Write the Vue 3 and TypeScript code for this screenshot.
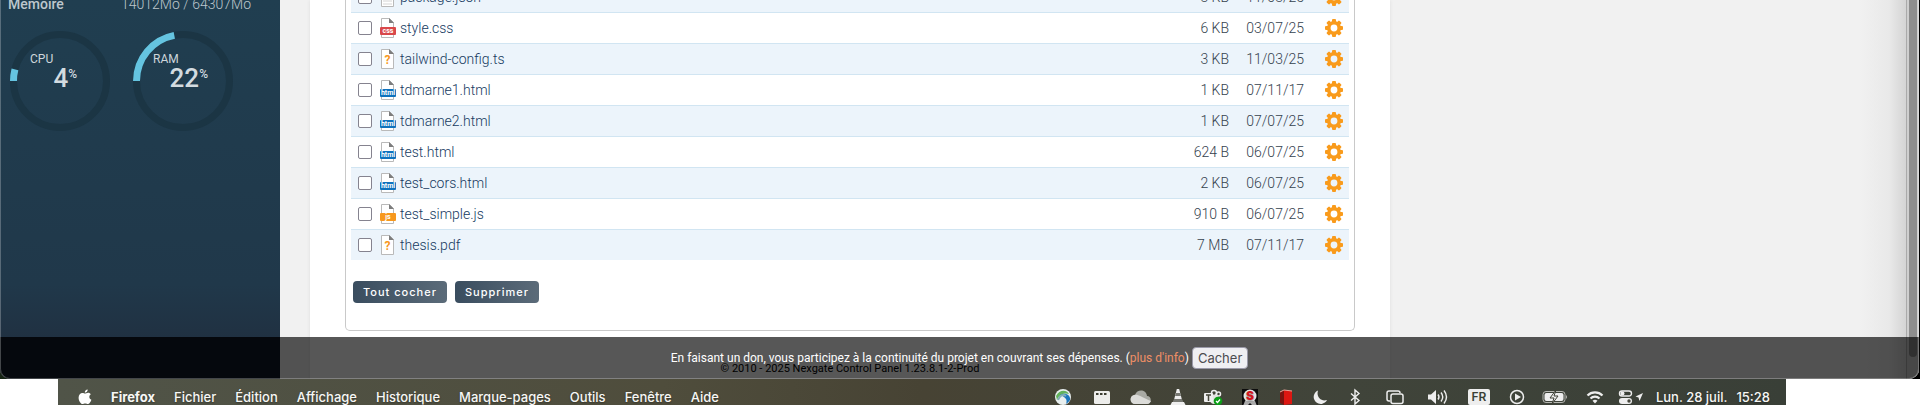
<script setup lang="ts">
import { ref } from 'vue'

type Kind = 'text' | 'css' | 'unknown' | 'html' | 'js'

interface FileRow {
  name: string
  kind: Kind
  size: string
  date: string
}

interface Gauge {
  label: string
  value: number
  x: number
}

const files: FileRow[] = [
  { name: 'package.json', kind: 'text', size: '3 KB', date: '11/03/25' },
  { name: 'style.css', kind: 'css', size: '6 KB', date: '03/07/25' },
  { name: 'tailwind-config.ts', kind: 'unknown', size: '3 KB', date: '11/03/25' },
  { name: 'tdmarne1.html', kind: 'html', size: '1 KB', date: '07/11/17' },
  { name: 'tdmarne2.html', kind: 'html', size: '1 KB', date: '07/07/25' },
  { name: 'test.html', kind: 'html', size: '624 B', date: '06/07/25' },
  { name: 'test_cors.html', kind: 'html', size: '2 KB', date: '06/07/25' },
  { name: 'test_simple.js', kind: 'js', size: '910 B', date: '06/07/25' },
  { name: 'thesis.pdf', kind: 'unknown', size: '7 MB', date: '07/11/17' },
]

const badgeColors: Record<string, string> = { css: '#d9484a', html: '#0f72bd', js: '#f7981d' }

const gauges: Gauge[] = [
  { label: 'CPU', value: 4, x: 67 },
  { label: 'RAM', value: 22, x: 75 },
]

const menus = ['Fichier', 'Édition', 'Affichage', 'Historique', 'Marque-pages', 'Outils', 'Fenêtre', 'Aide']

const selected = ref<string[]>([])
const teeth = [0, 45, 90, 135, 180, 225, 270, 315]

function checkAll() {
  selected.value = selected.value.length === files.length ? [] : files.map((f) => f.name)
}
</script>

<template>
  <div class="desktop">
    <div class="backdrop">
      <div class="window">
        <aside class="sidebar">
          <div class="memory"><strong>Mémoire</strong><span>14012Mo / 64307Mo</span></div>
          <div class="gauges">
            <svg v-for="g in gauges" :key="g.label" width="100" height="100" viewBox="0 0 100 100">
              <circle class="ring" cx="50" cy="50" r="46.5" />
              <circle class="arc" cx="50" cy="50" r="46.5" pathLength="100" :stroke-dasharray="g.value + ' 100'" transform="rotate(180 50 50)" />
              <text class="gauge-label" x="20" y="32">{{ g.label }}</text>
              <text class="gauge-value" :x="g.x" y="56">{{ g.value }}<tspan class="percent" dy="-9">%</tspan></text>
            </svg>
          </div>
        </aside>

        <main class="page">
          <div class="card">
            <section class="files">
              <table>
                <tbody>
                  <tr v-for="f in files" :key="f.name">
                    <td class="check"><input v-model="selected" type="checkbox" :value="f.name" :aria-label="f.name" /></td>
                    <td class="icon">
                      <svg width="18" height="20" viewBox="0 0 18 20">
                        <path d="M2.500 .5h8l4 4v15h-12z" fill="#fff" stroke="#b9b9b9" />
                        <path d="M10 0l5 5h-5z" fill="#7d7d7d" />
                        <path v-if="f.kind === 'text'" d="M4 8h9M4 11h9M4 14h9M4 17h9" stroke="#d5d5d5" />
                        <text v-else-if="f.kind === 'unknown'" class="question" x="8.5" y="15">?</text>
                        <template v-else>
                          <rect x="1" y="9" width="16" height="8" rx="1" :fill="badgeColors[f.kind]" />
                          <text class="badge" x="9" y="15">{{ f.kind }}</text>
                        </template>
                      </svg>
                    </td>
                    <td class="name"><a href="#">{{ f.name }}</a></td>
                    <td class="size">{{ f.size }}</td>
                    <td class="date">{{ f.date }}</td>
                    <td class="action">
                      <button type="button" class="gear" :aria-label="'Options ' + f.name">
                        <svg width="18" height="18" viewBox="-9 -9 18 18">
                          <rect v-for="t in teeth" :key="t" x="-2" y="-9" width="4" height="5" rx="1" fill="#f99b1c" :transform="'rotate(' + t + ')'" />
                          <circle r="5.2" fill="none" stroke="#f99b1c" stroke-width="3.6" />
                        </svg>
                      </button>
                    </td>
                  </tr>
                </tbody>
              </table>
              <div class="bulk">
                <button type="button" @click="checkAll">Tout cocher</button>
                <button type="button">Supprimer</button>
              </div>
            </section>
            <footer>© 2010 - 2025 Nexgate Control Panel 1.23.8.1-2-Prod</footer>
          </div>
        </main>

        <div class="edge"><div class="track"><div class="thumb"></div></div></div>

        <div class="banner">
          <span>En faisant un don, vous participez à la continuité du projet en couvrant ses dépenses. (<a href="#">plus d'info</a>)</span>
          <button type="button">Cacher</button>
        </div>
      </div>
    </div>

    <nav class="menubar">
      <svg class="apple" width="14" height="16" viewBox="0 0 14 16" fill="#fff">
        <path d="M9.700 .4c.1 1.700-1.300 3.200-2.900 3.200C6.600 2 8 .6 9.700 .4zM7 4.600c.7 0 1.700-.8 3.100-.8 1.200 0 2.200.6 2.800 1.500-2.300 1.400-1.900 4.600.5 5.500-.6 1.800-2 4.300-3.500 4.300-1 0-1.400-.6-2.700-.6s-1.800.6-2.700.6C2.700 15.100.6 11.800.6 8.800c0-3.100 1.900-4.900 3.800-4.900 1.200 0 2 .7 2.600.7z" />
      </svg>
      <strong>Firefox</strong>
      <span v-for="m in menus" :key="m">{{ m }}</span>

      <div class="status">
        <svg width="38" height="18" viewBox="-19 -9 38 18">
          <circle r="8" fill="#e9efef" />
          <path d="M-7-1C-4-7 3-8 6-3 3-4-3-4-6 3z" fill="#62b35c" />
          <path d="M-3-2C2-5 8-2 7 3 6 5 4 6 3 7 5 2 2 0-3-2z" fill="#1a76bd" />
          <path d="M-5 3C-3-2 0-3 3-1" fill="none" stroke="#83aeb7" stroke-width="2" />
        </svg>
        <svg width="40" height="18" viewBox="-20 -9 40 18">
          <rect x="-8" y="-6" width="16" height="13" rx="1.500" fill="#ededeb" />
          <path d="M-6-3h2.500M-2-3h2.500M2-3h2.500" stroke="#3b3c31" stroke-width="2" />
        </svg>
        <svg width="38" height="18" viewBox="-19 -9 38 18">
          <path d="M-6 7a4.500 4.500 0 0 1 0-9C-4-8 5-8 6-1c5 0 5 8 0 8z" fill="#a9aaa4" />
          <path d="M-7-2C-3-3 0 0 10 4 9 6 8 7 6 7H-6C-11 7-12-1-7-2z" fill="#dcdcd9" />
        </svg>
        <svg width="36" height="18" viewBox="-18 -9 36 18">
          <path d="M-1.200-8h2.400L5 7H-5z" fill="#eee" />
          <path d="M-2-4h4l1 3h-6zM-4 2h8l1 3H-5z" fill="#777872" />
          <path d="M-6 5H6l2 4H-8z" fill="#eee" />
        </svg>
        <svg width="34" height="18" viewBox="-17 -9 34 18">
          <circle cx="1" cy="-4" r="2.500" fill="none" stroke="#eee" stroke-width="1.500" />
          <circle cx="5.500" cy="-3" r="2" fill="none" stroke="#eee" stroke-width="1.500" />
          <path d="M-3-2h8v6c-1 4-7 4-8 0z" fill="#e3e3e0" />
          <rect x="-9" y="-4" width="9" height="9" rx="1" fill="#eee" />
          <path d="M-7-2h5M-4.500-2v6" stroke="#45463a" stroke-width="1.500" />
          <circle cx="5" cy="4" r="4.300" fill="#0c9d17" />
          <path d="M3 4l1.500 1.500L7 2.500" fill="none" stroke="#fff" stroke-width="1.200" />
        </svg>
        <svg width="40" height="18" viewBox="-20 -9 40 18">
          <rect x="-8" y="-8" width="16" height="17" fill="#0c0c0c" />
          <circle cy="-1" r="6.500" fill="#e6e6e6" />
          <path d="M-5 4l-2 5h4l3-3 3 3h4l-2-5z" fill="#aaa" />
          <text class="s-mark" x="0" y="3">S</text>
        </svg>
        <svg width="32" height="18" viewBox="-16 -9 32 18">
          <path d="M-6-5l4-2v15l-4-2z" fill="#7c1410" />
          <path d="M-2-7l8 1v13l-8 1z" fill="#dd1712" />
          <path d="M-6-5l4-2 8 1" fill="none" stroke="#e9a39a" />
        </svg>
        <svg width="36" height="18" viewBox="-18 -9 36 18"><path d="M-2-6.500A7 7 0 1 0 7 3C1 5-4 0-2-6.500z" fill="#eee" /></svg>
        <svg width="34" height="18" viewBox="-17 -9 34 18"><path d="M-4-3.500L4 3.500 0 7V-7l4 3.500-8 7" fill="none" stroke="#eee" stroke-width="1.400" /></svg>
        <svg width="46" height="18" viewBox="-23 -9 46 18" fill="none" stroke="#eee" stroke-width="1.500">
          <path d="M-5 4h-1a2 2 0 0 1-2-2v-6a2 2 0 0 1 2-2H3a2 2 0 0 1 2 2" />
          <rect x="-4" y="-3" width="12" height="9.500" rx="2" />
        </svg>
        <svg width="40" height="18" viewBox="-20 -9 40 18">
          <path d="M-10-2.500h3l5-4.500V7l-5-4.500h-3z" fill="#eee" />
          <path d="M0-2.500q2 2.500 0 5M3-4.500q3.500 4.500 0 9M6-6.500q5 6.500 0 13" fill="none" stroke="#eee" stroke-width="1.400" />
        </svg>
        <span class="lang"><b>FR</b></span>
        <svg width="34" height="18" viewBox="-17 -9 34 18">
          <circle r="6.500" fill="none" stroke="#eee" stroke-width="1.500" />
          <path d="M-2-3.500L4 0-2 3.500z" fill="#eee" />
        </svg>
        <svg width="42" height="18" viewBox="-21 -9 42 18">
          <rect x="-12" y="-5.500" width="22" height="11" rx="3" fill="none" stroke="#b5b6b1" />
          <rect x="-10.500" y="-4" width="19" height="8" rx="2" fill="#eee" />
          <path d="M11-2q2 2 0 4z" fill="#b5b6b1" />
          <path d="M1-7L-5 1h4l-2 6 6-8h-4z" fill="#eee" stroke="#3e4036" />
        </svg>
        <svg width="38" height="18" viewBox="-19 -9 38 18">
          <path d="M-7.500-1.500a10.500 10.500 0 0 1 15 0M-4.500 1.500a6.500 6.500 0 0 1 9 0" fill="none" stroke="#eee" stroke-width="2.200" />
          <path d="M0 6.500l-2.500-2.800q2.500-1.800 5 0z" fill="#eee" />
        </svg>
        <svg width="34" height="18" viewBox="-17 -9 34 18">
          <rect x="-11.500" y="-6" width="12" height="5" rx="2.500" fill="none" stroke="#eee" stroke-width="1.400" />
          <circle cx="-8.500" cy="-3.500" r="2" fill="#eee" />
          <rect x="-12" y="1" width="13" height="6" rx="3" fill="#eee" />
          <circle cx="-2" cy="4" r="1.700" fill="#45463c" />
          <path d="M12-4L8.500 4 7.500 .5 4.500-.5z" fill="#eee" />
        </svg>
        <time class="clock"><span>Lun. 28 juil.</span><span>15:28</span></time>
      </div>
    </nav>
  </div>
</template>

<style>
body {
  margin: 0;
}
</style>

<style scoped>
.desktop {
  height: 100vh;
  overflow: hidden;
  background: #fff;
  font-family: Roboto, "Liberation Sans", sans-serif;
}

button {
  cursor: pointer;
}

.backdrop {
  background: linear-gradient(90deg, #162414, #000 10%);
  padding-right: 1px;
}

.window {
  position: relative;
  display: flex;
  border-radius: 0 0 10px 10px;
  overflow: hidden;
  background: #f1f1f1;
}

.window::after {
  content: "";
  position: absolute;
  inset: -12px 0 0;
  border: 1px solid rgba(255, 255, 255, 0.25);
  border-radius: 10px;
  pointer-events: none;
}

.sidebar {
  flex: 0 0 280px;
  background: linear-gradient(#203e50, #20384a 75%, #203142 89%, #0f1a26 89%);
  color: #bdc7cd;
}

.memory {
  display: flex;
  justify-content: space-between;
  height: 16px;
  margin-top: -4px;
  padding: 0 29px 0 8px;
  font-size: 14px;
  line-height: 16px;
}

.memory strong {
  font-weight: 500;
}

.memory span {
  font-weight: 300;
}

.gauges {
  display: flex;
  gap: 23px;
  padding: 19px 10px 0;
}

.ring,
.arc {
  fill: none;
  stroke: #1b3544;
  stroke-width: 7;
}

.arc {
  stroke: #65c4e0;
}

.gauge-label {
  fill: #cdd6db;
  font-size: 12px;
}

.gauge-value {
  fill: #d3dbe0;
  font-size: 26px;
  font-weight: 500;
  text-anchor: end;
}

.percent {
  font-size: 12px;
}

.page {
  flex: 1;
  padding: 0 0 0 30px;
}

.card {
  max-width: 1080px;
  background: #fff;
  box-shadow: 0 0 4px rgba(0, 0, 0, 0.08);
}

.files {
  margin: 0 35px;
  padding: 0 5px 27px;
  border: 1px solid #c9c9c9;
  border-top: 0;
  border-radius: 0 0 5px 5px;
  overflow: hidden;
}

table {
  width: 100%;
  margin-top: -18px;
  border-collapse: collapse;
  font-size: 14px;
  font-weight: 300;
  color: #35424e;
}

td {
  height: 30px;
  padding: 0;
  border-bottom: 1px solid #d1e5f2;
  line-height: 20px;
  white-space: nowrap;
}

tr:last-child td {
  border-bottom: 0;
}

tr:nth-child(odd) {
  background: #ecf4fb;
}

.check {
  width: 28px;
}

.check input {
  appearance: none;
  display: block;
  width: 14px;
  height: 14px;
  margin: 0 0 0 7px;
  border: 1px solid #85838f;
  border-radius: 2px;
  background: #fff;
}

.check input:checked {
  background: #2b6cb0;
}

.icon {
  width: 21px;
}

.icon svg,
.gear svg {
  display: block;
}

.question {
  fill: #f7981d;
  font-size: 12px;
  font-weight: 700;
  text-anchor: middle;
}

.badge {
  fill: #fff;
  font-size: 7px;
  font-weight: 700;
  text-anchor: middle;
}

.name a {
  color: #163a5f;
  text-decoration: none;
}

.size {
  width: 80px;
  text-align: right;
}

.date {
  width: 75px;
  text-align: right;
}

.action {
  width: 45px;
}

.gear {
  display: block;
  margin-left: 21px;
  padding: 0;
  border: 0;
  background: none;
}

.bulk {
  display: flex;
  gap: 8px;
  margin: 21px 2px 0;
}

.bulk button {
  height: 22px;
  padding: 0 10px;
  border: 0;
  border-radius: 4px;
  background: linear-gradient(90deg, #3a4d5f, #5b6b79);
  color: #fff;
  font: 500 11px/22px Inter, sans-serif;
  letter-spacing: 1px;
}

footer {
  height: 48px;
  color: #000;
  font-size: 11px;
  line-height: 75px;
  text-align: center;
}

.edge {
  position: absolute;
  top: 0;
  right: 0;
  bottom: 0;
  width: 60px;
  display: flex;
  justify-content: flex-end;
  background: linear-gradient(90deg, #f1f1f1, #e9e9e9 50%, #c4c4c4);
}

.track {
  width: 13px;
  border-left: 1px solid #aaa;
  background: #cfcfcf;
  padding-bottom: 22px;
  box-sizing: border-box;
  display: flex;
  justify-content: center;
}

.thumb {
  width: 8px;
  border-radius: 0 0 4px 4px;
  background: #8e8e8e;
}

.banner {
  position: absolute;
  right: 0;
  bottom: 0;
  left: 0;
  display: flex;
  align-items: center;
  justify-content: center;
  gap: 3px;
  height: 42px;
  background: rgba(0, 0, 0, 0.66);
  color: #fff;
  font-size: 12px;
}

.banner a {
  color: #ef8f66;
  text-decoration: none;
}

.banner button {
  height: 22px;
  padding: 0 5px;
  border: 1px solid #9a99a8;
  border-radius: 4px;
  background: #efeff2;
  color: #4b4b4f;
  font: 400 13px/18px Inter, sans-serif;
}

.menubar {
  display: flex;
  align-items: center;
  gap: 19px;
  height: 36px;
  margin: 0 134px 0 58px;
  padding: 0 16px 0 20px;
  background: linear-gradient(90deg, #505448, #4f4d3c 35%, #474334 50%, #40443a 75%, #393f37);
  color: #f7f7f5;
  font-family: Inter, sans-serif;
  font-size: 13px;
  font-weight: 500;
  line-height: 36px;
  text-shadow: 0 1px 2px rgba(0, 0, 0, 0.35);
  white-space: nowrap;
}

.menubar strong {
  font-weight: 700;
}

.status {
  display: flex;
  align-items: center;
  margin-left: auto;
}

.s-mark {
  fill: #d3161d;
  font-size: 12px;
  font-weight: 900;
  text-anchor: middle;
}

.lang {
  display: flex;
  justify-content: center;
  width: 42px;
}

.lang b {
  width: 22px;
  height: 16px;
  border-radius: 2px;
  background: #eee;
  color: #3b3f35;
  font-size: 12px;
  font-weight: 600;
  line-height: 16px;
  text-align: center;
  text-shadow: none;
}

.clock {
  display: flex;
  gap: 9px;
  margin-left: 8px;
}
</style>
